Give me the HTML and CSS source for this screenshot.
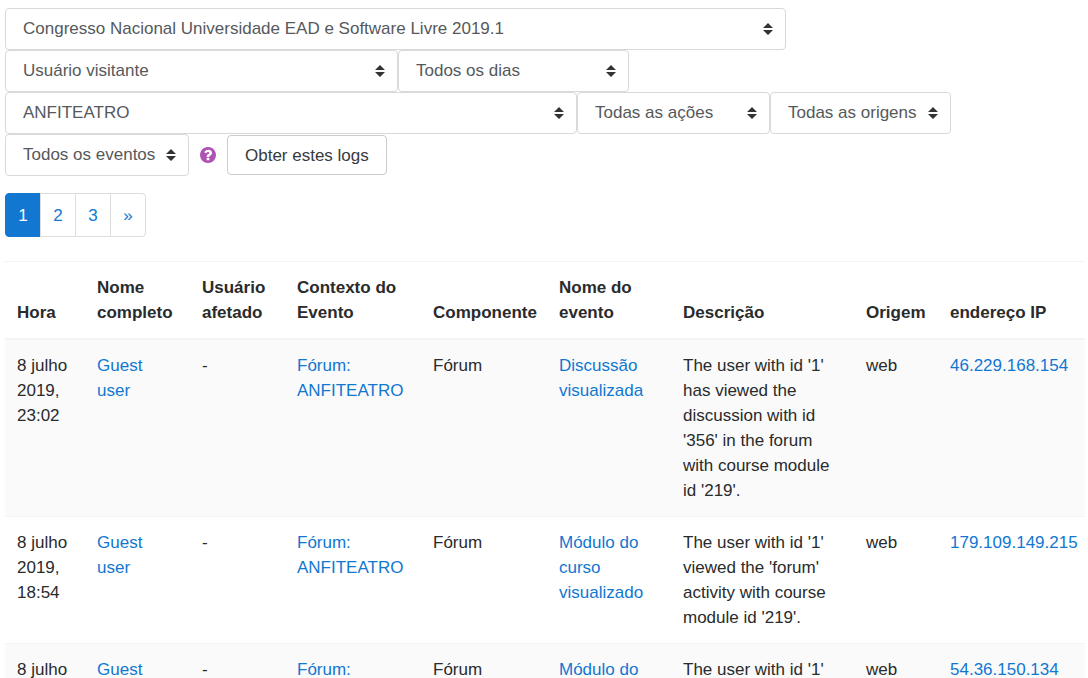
FILE: index.html
```
<!DOCTYPE html>
<html lang="pt-br">
<head>
<meta charset="utf-8">
<meta name="viewport" content="width=device-width, initial-scale=1">
<title>Logs</title>
<link rel="stylesheet" href="styles.css">
</head>
<body>
<main class="report">
  <form class="filters">
    <select class="select select-course" aria-label="Curso"><option>Congresso Nacional Universidade EAD e Software Livre 2019.1</option></select>
    <select class="select select-user" aria-label="Usuário"><option>Usuário visitante</option></select>
    <select class="select select-day" aria-label="Dia"><option>Todos os dias</option></select>
    <select class="select select-activity" aria-label="Atividade"><option>ANFITEATRO</option></select>
    <select class="select select-action" aria-label="Ação"><option>Todas as ações</option></select>
    <select class="select select-origin" aria-label="Origem"><option>Todas as origens</option></select>
    <select class="select select-event" aria-label="Evento"><option>Todos os eventos</option></select>
    <a class="help" href="#" aria-label="Ajuda">
      <svg class="help-icon" viewBox="0 0 1536 1536" aria-hidden="true"><path fill="currentColor" d="M896 1248v-192q0-14-9-23t-23-9H672q-14 0-23 9t-9 23v192q0 14 9 23t23 9h192q14 0 23-9t9-23zm256-672q0-88-55.500-163T958 297t-170-41q-243 0-371 213-15 24 8 42l132 100q7 6 19 6 16 0 25-12 53-68 86-92 34-24 86-24 48 0 85.500 26t37.500 59q0 38-20 61t-68 45q-63 28-115.500 86.500T640 892v36q0 14 9 23t23 9h192q14 0 23-9t9-23q0-19 21.500-49.500T972 829q32-18 49-28.500t46-35 44.500-48 28-60.500 12.500-81zm384 192q0 209-103 385.500T1153.500 1433 768 1536t-385.500-103T103 1153.500 0 768t103-385.500T382.500 103 768 0t385.500 103T1433 382.500 1536 768z"/></svg>
    </a>
    <button class="button" type="submit">Obter estes logs</button>
  </form>

  <nav class="pagination" aria-label="Página">
    <a class="page page-active" href="#" aria-current="page">1</a>
    <a class="page" href="#">2</a>
    <a class="page" href="#">3</a>
    <a class="page" href="#">»</a>
  </nav>

  <table class="logs">
    <colgroup>
      <col class="col-time"><col class="col-name"><col class="col-affected"><col class="col-context"><col class="col-component"><col class="col-event"><col class="col-description"><col class="col-origin"><col class="col-ip">
    </colgroup>
    <thead>
      <tr><th>Hora</th><th>Nome completo</th><th>Usuário afetado</th><th>Contexto do Evento</th><th>Componente</th><th>Nome do evento</th><th>Descrição</th><th>Origem</th><th>endereço IP</th></tr>
    </thead>
    <tbody>
      <tr>
        <td>8 julho 2019, 23:02</td>
        <td><a href="#">Guest user</a></td>
        <td>-</td>
        <td><a href="#">Fórum: ANFITEATRO</a></td>
        <td>Fórum</td>
        <td><a href="#">Discussão visualizada</a></td>
        <td>The user with id '1' has viewed the discussion with id '356' in the forum with course module id '219'.</td>
        <td>web</td>
        <td><a href="#">46.229.168.154</a></td>
      </tr>
      <tr>
        <td>8 julho 2019, 18:54</td>
        <td><a href="#">Guest user</a></td>
        <td>-</td>
        <td><a href="#">Fórum: ANFITEATRO</a></td>
        <td>Fórum</td>
        <td><a href="#">Módulo do curso visualizado</a></td>
        <td>The user with id '1' viewed the 'forum' activity with course module id '219'.</td>
        <td>web</td>
        <td><a href="#">179.109.149.215</a></td>
      </tr>
      <tr>
        <td>8 julho</td>
        <td><a href="#">Guest</a></td>
        <td>-</td>
        <td><a href="#">Fórum:</a></td>
        <td>Fórum</td>
        <td><a href="#">Módulo do</a></td>
        <td>The user with id '1'</td>
        <td>web</td>
        <td><a href="#">54.36.150.134</a></td>
      </tr>
    </tbody>
  </table>
</main>
</body>
</html>
```
FILE: styles.css
```
* {
  box-sizing: border-box;
}

html {
  scrollbar-width: none;
}

body {
  margin: 0;
  background: #fff;
  color: #292b2c;
  font: 17px/25px "Liberation Sans", Arial, sans-serif;
}

a {
  color: #1177d1;
  text-decoration: none;
}

.report {
  padding: 8px 3px 0 5px;
}

.filters {
  display: flex;
  flex-wrap: wrap;
  align-items: center;
}

.select {
  height: 42px;
  max-width: 100%;
  padding: 0 32px 2px 17px;
  border: 1px solid #d9d9d9;
  border-radius: 4px;
  appearance: none;
  background: #fff url("data:image/svg+xml,%3Csvg xmlns='http://www.w3.org/2000/svg' viewBox='0 0 10 12'%3E%3Cpath fill='%23333' d='M5 0l5 5H0zM5 12L0 7h10z'/%3E%3C/svg%3E") no-repeat right 12px center / 10px 12px;
  color: #55595c;
  font: inherit;
}

.select-course { width: 781px; }
.select-user { width: 393px; }
.select-day { width: 231px; }
.select-activity { width: 572px; }
.select-action { width: 193px; }
.select-origin { width: 181px; }
.select-event { width: 184px; }

.help {
  display: flex;
  margin: 0 11px;
  color: #ae53b3;
}

.help-icon {
  width: 16px;
  height: 16px;
}

.button {
  height: 40px;
  padding: 0 17px;
  border: 1px solid #ccc;
  border-radius: 4px;
  background: #fff;
  color: #373a3c;
  font: inherit;
}

.pagination {
  display: flex;
  margin: 17px 0 24px;
}

.page {
  min-width: 36px;
  margin-left: -1px;
  padding: 9px 12px 8px;
  border: 1px solid #ddd;
  background: #fff;
  text-align: center;
}

.page:first-child {
  margin-left: 0;
  border-radius: 4px 0 0 4px;
}

.page:last-child {
  border-radius: 0 4px 4px 0;
}

.page-active {
  border-color: #1177d1;
  background: #1177d1;
  color: #fff;
}

.logs {
  width: 100%;
  border-collapse: collapse;
}

.logs th,
.logs td {
  padding: 13px 12px;
  border-top: 1px solid #f3f3f3;
  text-align: left;
  vertical-align: top;
}

.logs th {
  padding-right: 8px;
  border-bottom: 2px solid #f3f3f3;
  vertical-align: bottom;
}

.logs td:last-child {
  padding-right: 6px;
}

.logs tbody tr:nth-child(odd) {
  background: #fafafa;
}

.col-time { width: 80px; }
.col-name { width: 105px; }
.col-affected { width: 95px; }
.col-context { width: 136px; }
.col-component { width: 126px; }
.col-event { width: 124px; }
.col-description { width: 183px; }
.col-origin { width: 84px; }
.col-ip { width: 147px; }
```
